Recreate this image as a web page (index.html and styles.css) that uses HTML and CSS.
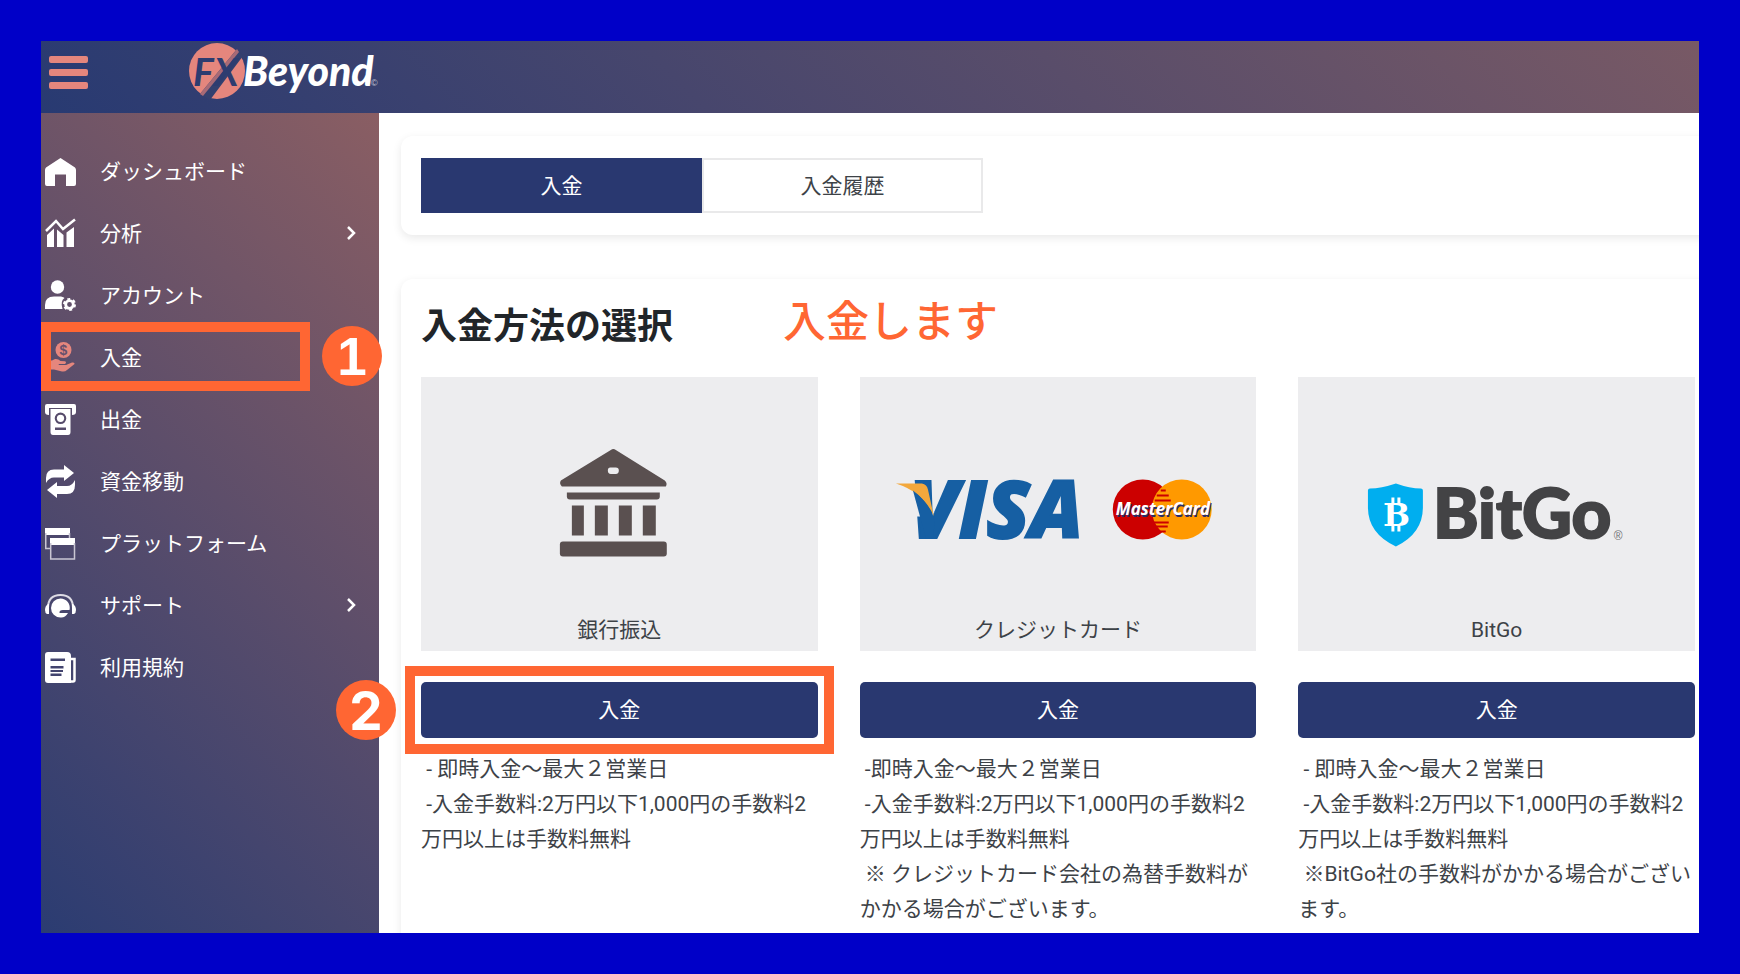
FILE: index.html
```html
<!DOCTYPE html>
<html lang="ja">
<head>
  <meta charset="UTF-8" />
  <meta name="viewport" content="width=device-width, initial-scale=1.0"/>
  <title>FXBeyond 入金</title>
  <link rel="stylesheet" href="styles.css">
</head>
<body>
  <div class="screen">
    <header class="header">
      <button class="menu-button" type="button" aria-label="メニュー">
        <span></span><span></span><span></span>
      </button>
      <a class="brand" href="#">
        <svg width="192" height="64" viewBox="0 0 192 64">
          <circle cx="29" cy="31" r="28" fill="#e5867d"/>
          <path d="M12 54 L49 9 L55 16 L22 60 Z" fill="#33406f"/>
          <path d="M12 54 L49 9 L51 12 L15 56 Z" fill="#a86a76"/>
          <text class="logo-fx" x="5" y="46">FX</text>
          <text class="logo-name" x="55" y="46">Beyond</text>
          <text class="logo-mark" x="183" y="46">©</text>
        </svg>
      </a>
    </header>

    <div class="body">
      <nav class="sidebar">
        <ul class="nav">
          <li class="nav-item">
            <a href="#">
              <svg class="icon" viewBox="0 0 31 31"><path d="M15.500 2 L30 11.500 Q31 12.500 31 14 V28 Q31 30 29 30 H21 V18.500 H10 V30 H2 Q0 30 0 28 V14 Q0 12.500 1 11.500 Z"/></svg>
              <span class="nav-label">ダッシュボード</span>
            </a>
          </li>
          <li class="nav-item">
            <a href="#">
              <svg class="icon" viewBox="0 0 31 31"><path d="M1 13 L11 3 L18 11 L30 1.500" fill="none" stroke="#fff" stroke-width="2.500"/><path d="M2 17 L9 10.500 V29 H2 Z M12 11.500 L18.500 17 V29 H12 Z M21.500 14.500 L29 9 V29 H21.500 Z"/></svg>
              <span class="nav-label">分析</span>
              <svg class="chevron" viewBox="0 0 10 16"><path d="M2 2 L8 8 L2 14"/></svg>
            </a>
          </li>
          <li class="nav-item">
            <a href="#">
              <svg class="icon" viewBox="0 0 31 31"><circle cx="12.500" cy="7" r="6.700"/><path d="M0 29 V25 Q0 16.500 9 16.500 H16 Q19 17 19.500 18 Q15 21 17.500 29 Z"/><circle cx="24.500" cy="24.500" r="3.800" fill="none" stroke="#fff" stroke-width="2.800"/><circle cx="24.500" cy="24.500" r="5.500" fill="none" stroke="#fff" stroke-width="2" stroke-dasharray="2.900 2.860"/></svg>
              <span class="nav-label">アカウント</span>
            </a>
          </li>
          <li class="nav-item active">
            <a href="#">
              <svg class="icon" viewBox="0 0 31 31"><circle cx="18.500" cy="8" r="8"/><text class="coin" x="18.500" y="13">$</text><path d="M0 18.500 H7 L10 17 Q13 16.500 15.500 19 L20 19.300 Q22 20.500 20 22 H13.500 L14 23 H21 L27 20.500 Q30 20 29.500 22 L22 28 Q20 30 17 29.500 L9 27.500 H0 Z"/></svg>
              <span class="nav-label">入金</span>
            </a>
            <span class="nav-frame"></span>
            <span class="step step-nav">1</span>
          </li>
          <li class="nav-item">
            <a href="#">
              <svg class="icon" viewBox="0 0 31 31"><path d="M2 0 H29 Q31 0 31 2 V8 Q31 11 27 11 V4 H4 V11 Q0 11 0 8 V2 Q0 0 2 0 Z"/><path fill-rule="evenodd" d="M5.500 5 H25.500 V28 Q25.500 31 23 31 H8 Q5.500 31 5.500 28 Z M15.500 8.500 A5.800 5.800 0 1 0 15.500 20.100 A5.800 5.800 0 1 0 15.500 8.500 Z M10 23.500 V26 H21 V23.500 Z"/><circle cx="15.500" cy="14.300" r="3.600"/></svg>
              <span class="nav-label">出金</span>
            </a>
          </li>
          <li class="nav-item">
            <a href="#">
              <svg class="icon" viewBox="0 0 31 31"><path d="M1 17 V12 Q1 3.500 9 3.500 H19 V-1 L29 7 L19 15 V11.500 H9 Q4 11.500 1 17 Z M30 14 V19 Q30 28 22 28 H12 V32 L2 24 L12 16 V20 H22 Q27 20 30 14 Z"/></svg>
              <span class="nav-label">資金移動</span>
            </a>
          </li>
          <li class="nav-item">
            <a href="#">
              <svg class="icon" viewBox="0 0 31 31"><path d="M0 0 H25 V7 H0 Z M5 10 H30 V17 H5 Z"/><path d="M0.750 5 V20.500 H5 M24.500 5 V10 M5.700 15 V31 H29.500 V15" fill="none" stroke="#c9c6d3" stroke-width="1.500"/></svg>
              <span class="nav-label">プラットフォーム</span>
            </a>
          </li>
          <li class="nav-item">
            <a href="#">
              <svg class="icon" viewBox="0 0 31 31"><path d="M3 18 Q3 5 15.500 5 Q28 5 28 18" fill="none" stroke="#dddbe4" stroke-width="2"/><path d="M4 14 H3 Q0 16 0 20 Q0 23 2 24 H4 Z M27 14 H28 Q31 16 31 20 Q31 23 29 24 H27 Z"/><path d="M15.500 8.500 A9.300 9.300 0 0 1 24.500 20 H18 Q14 20 14.500 23 H23 Q20 28 15.500 27.500 A9.500 9.500 0 0 1 15.500 8.500 Z"/></svg>
              <span class="nav-label">サポート</span>
              <svg class="chevron" viewBox="0 0 10 16"><path d="M2 2 L8 8 L2 14"/></svg>
            </a>
          </li>
          <li class="nav-item">
            <a href="#">
              <svg class="icon" viewBox="0 0 31 31"><path fill-rule="evenodd" d="M3 0 H22 Q26 0 26 4 V31 H3 Q0 31 0 28 V3 Q0 0 3 0 Z M5.500 6.500 V9 H20 V6.500 Z M5.500 14 V16.500 H18.500 V14 Z M5.500 18 V20 H18 V18 Z M5.500 21.500 V24 H16.500 V21.500 Z"/><path d="M26 7 H29.500 V28 Q29.500 29.500 28 29.500 H24" fill="none" stroke="#fff" stroke-width="2.500"/></svg>
              <span class="nav-label">利用規約</span>
            </a>
          </li>
        </ul>
      </nav>

      <main class="main">
        <section class="panel">
          <div class="tabs">
            <button class="tab tab-active" type="button">入金</button>
            <button class="tab" type="button">入金履歴</button>
          </div>
        </section>

        <section class="panel">
          <div class="title-row">
            <h1>入金方法の選択</h1>
            <p class="callout">入金します</p>
          </div>

          <div class="methods">
            <article class="method">
              <div class="tile">
                <svg class="logo" viewBox="0 0 397 235">
                  <g fill="#5a5050">
                    <path fill-rule="evenodd" d="M190 72.500 Q192.500 70.500 195 72.500 L244 103 Q247 106 245 109 H141 Q138 106 140 103 Z M189.500 90 Q187 90 187 93 Q187 96.500 190 96.500 H195 Q198 96.500 198 93 Q198 90 195 90 Z"/>
                    <path d="M146 115 H239 V119 Q239 122 236 122 H149 Q146 122 146 119 Z"/>
                    <path d="M151 128 H163 V158 H151 Z M174 128 H187 V158 H174 Z M198 128 H211 V158 H198 Z M222 128 H235 V158 H222 Z"/>
                    <rect x="139" y="164" width="107" height="15" rx="3"/>
                  </g>
                </svg>
                <p class="tile-name">銀行振込</p>
              </div>
              <div class="action">
                <button class="deposit-button" type="button">入金</button>
                <span class="action-frame"></span>
                <span class="step step-action">2</span>
              </div>
              <p class="note">&nbsp;- 即時入金～最大２営業日<br>&nbsp;-入金手数料:2万円以下1,000円の手数料2万円以上は手数料無料</p>
            </article>

            <article class="method">
              <div class="tile">
                <svg class="logo" viewBox="0 0 397 235">
                  <text class="logo-visa" x="50" y="161">VISA</text>
                  <path d="M36 106 H62 Q67 107 68 112 L74 139 Q64 115 36 106 Z" fill="#f3a83c"/>
                  <path d="M36 108 Q62 116 72 139 L50 139 L50 122 Z" fill="#ededef"/>
                  <path d="M53 113 Q68 124 75 143 L73 161 H66 Z" fill="#165fa3"/>
                  <circle cx="283" cy="132" r="30" fill="#c00"/>
                  <circle cx="322" cy="132" r="30" fill="#f90"/>
                  <path d="M301 113 H306 M297 118 H309 M295 123 H311 M294 145 H309 M296 149 H308 M299 154 H306" stroke="#c00" stroke-width="2"/>
                  <text class="logo-mc-shadow" x="257" y="140">MasterCard</text>
                  <text class="logo-mc" x="256" y="138">MasterCard</text>
                </svg>
                <p class="tile-name">クレジットカード</p>
              </div>
              <div class="action">
                <button class="deposit-button" type="button">入金</button>
              </div>
              <p class="note">&nbsp;-即時入金～最大２営業日<br>&nbsp;-入金手数料:2万円以下1,000円の手数料2万円以上は手数料無料<br>&nbsp;※ クレジットカード会社の為替手数料がかかる場合がございます。</p>
            </article>

            <article class="method">
              <div class="tile">
                <svg class="logo" viewBox="0 0 397 235">
                  <path d="M98 106 Q83 111 72 111 Q70 111 70 113 V130 Q70 156 98 169 Q125 156 125 130 V113 Q125 111 123 111 Q112 111 98 106 Z" fill="#00aeef"/>
                  <path d="M95 120 V127 M101 120 V127 M95 147 V154 M101 147 V154" stroke="#fff" stroke-width="3"/>
                  <text class="logo-coin" x="85" y="149">B</text>
                  <text class="logo-bitgo" x="135" y="161">BitGo</text>
                  <text class="logo-reg" x="316" y="163">®</text>
                </svg>
                <p class="tile-name">BitGo</p>
              </div>
              <div class="action">
                <button class="deposit-button" type="button">入金</button>
              </div>
              <p class="note">&nbsp;- 即時入金～最大２営業日<br>&nbsp;-入金手数料:2万円以下1,000円の手数料2万円以上は手数料無料<br>&nbsp;※BitGo社の手数料がかかる場合がございます。</p>
            </article>
          </div>
        </section>
      </main>
    </div>
  </div>
</body>
</html>
```

FILE: styles.css
```css
* {
  box-sizing: border-box;
}

body {
  margin: 0;
  padding: 41px;
  background-color: #0000c8;
  font-family: Roboto, "Noto Sans CJK JP", sans-serif;
  font-size: 21px;
  color: #3d4247;
}

h1, p, ul {
  margin: 0;
  padding: 0;
}

button {
  font-family: inherit;
  font-size: 21px;
  cursor: pointer;
}

.screen {
  display: flex;
  flex-direction: column;
  height: calc(100vh - 82px);
  overflow: hidden;
  background-color: white;
}

/* header */
.header {
  display: flex;
  align-items: center;
  gap: 100px;
  flex: none;
  height: 72px;
  padding: 0 8px 10px;
  background: linear-gradient(45deg, #283a72, #785965);
}

.menu-button {
  display: flex;
  flex-direction: column;
  gap: 6px;
  width: 39px;
  padding: 0;
  border: none;
  background: none;
}

.menu-button span {
  height: 7px;
  border-radius: 2px;
  background-color: #e5867d;
}

.brand {
  display: flex;
}

.logo-fx {
  font: italic 700 39px Lato, sans-serif;
  fill: #2d3c70;
}

.logo-name {
  font: italic 900 41px Lato, sans-serif;
  fill: white;
}

.logo-mark {
  font: 9px "Liberation Sans", sans-serif;
  fill: #c5c8d8;
}

/* sidebar */
.body {
  display: flex;
  flex: 1;
  min-height: 0;
}

.sidebar {
  position: relative;
  z-index: 1;
  flex: none;
  width: 338px;
  padding-top: 27px;
  background: linear-gradient(45deg, #2b3c72, #8a5e63);
}

.nav {
  list-style: none;
}

.nav-item {
  position: relative;
}

.nav-item a {
  display: flex;
  align-items: center;
  gap: 24px;
  height: 62px;
  padding: 0 23px 0 4px;
  color: white;
  text-decoration: none;
}

.icon {
  width: 31px;
  height: 31px;
  overflow: visible;
  fill: white;
}

.active .icon {
  fill: #e5867d;
}

.coin {
  font: bold 14px "Liberation Sans", sans-serif;
  text-anchor: middle;
  fill: #66506c;
}

.nav-label {
  flex: 1;
  padding-bottom: 3px;
}

.chevron {
  width: 10px;
  height: 16px;
  fill: none;
  stroke: white;
  stroke-width: 2.5;
}

/* orange guide marks */
.nav-frame {
  position: absolute;
  top: -4px;
  left: 0;
  width: 269px;
  height: 69px;
  border: 10px solid #ff6633;
}

.step {
  position: absolute;
  z-index: 2;
  width: 60px;
  height: 60px;
  border-radius: 50%;
  background-color: #ff6633;
  color: white;
  font-family: "Liberation Sans", sans-serif;
  font-size: 53px;
  font-weight: bold;
  line-height: 62px;
  text-align: center;
}

.step-nav {
  top: 0;
  left: 281px;
}

.step-action {
  top: -2px;
  left: -85px;
  font-family: Inter, sans-serif;
}

.action-frame {
  position: absolute;
  inset: -16px;
  border: 10px solid #ff6633;
  pointer-events: none;
}

.callout {
  padding-bottom: 10px;
  color: #ff6633;
  font-size: 43px;
  font-weight: 500;
}

/* content */
.main {
  flex: 1;
  min-width: 0;
  padding: 23px 0 0 22px;
}

.panel {
  margin-right: -20px;
  padding: 22px 24px 22px 20px;
  border-radius: 12px;
  box-shadow: 0 3px 10px rgba(0, 0, 0, 0.09);
}

.panel + .panel {
  margin-top: 44px;
}

.tabs {
  display: flex;
}

.tab {
  width: 281px;
  height: 55px;
  padding-bottom: 5px;
  border: 2px solid #e9e9ea;
  background-color: white;
  color: #3d4247;
}

.tab-active {
  border-color: #293870;
  background-color: #293870;
  color: white;
}

.title-row {
  display: flex;
  align-items: center;
  gap: 110px;
  height: 44px;
  margin-bottom: 32px;
}

.title-row h1 {
  color: #212529;
  font-size: 36px;
}

.methods {
  display: grid;
  grid-template-columns: repeat(3, 1fr);
  gap: 42px;
}

.tile {
  padding-bottom: 3px;
  background-color: #ededef;
}

.logo {
  display: block;
  width: 100%;
  height: 236px;
}

.tile-name {
  line-height: 35px;
  text-align: center;
}

.action {
  position: relative;
  margin-top: 31px;
}

.deposit-button {
  display: block;
  width: 100%;
  height: 56px;
  padding-bottom: 5px;
  border: none;
  border-radius: 5px;
  background-color: #293870;
  color: white;
}

.note {
  margin-top: 14px;
  line-height: 35px;
}

.logo-visa {
  font: italic 800 79px "Open Sans", sans-serif;
  fill: #165fa3;
  stroke: #165fa3;
  stroke-width: 2;
}

.logo-mc,
.logo-mc-shadow {
  font: italic 700 17px "Open Sans", sans-serif;
  fill: white;
}

.logo-mc-shadow {
  fill: #2b2b66;
}

.logo-coin {
  font: bold 32px "DejaVu Serif", serif;
  fill: white;
}

.logo-bitgo {
  font: 900 69px Lato, sans-serif;
  fill: #434345;
  stroke: #434345;
  stroke-width: 2;
}

.logo-reg {
  font: 12px "Liberation Sans", sans-serif;
  fill: #707072;
}
```
